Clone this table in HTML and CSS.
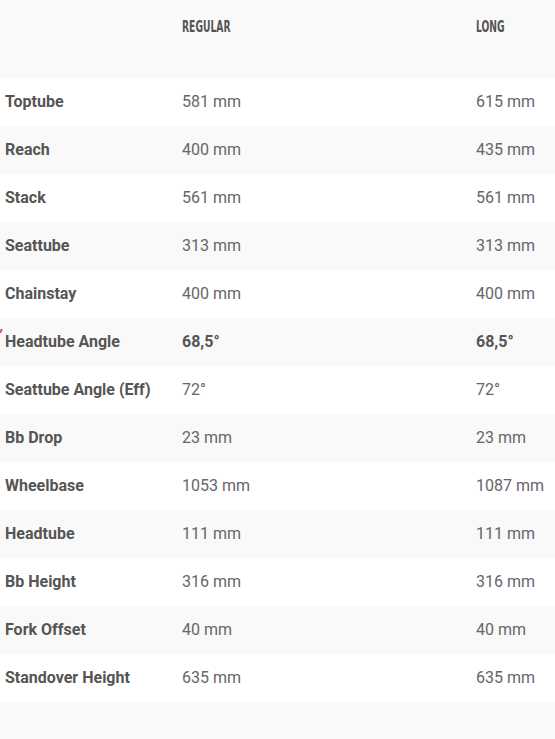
FILE: index.html
```html
<!DOCTYPE html>
<html lang="en">
<head>
<meta charset="utf-8">
<title>Geometry</title>
<link rel="stylesheet" href="styles.css">
</head>
<body>
<div class="geo">
  <div class="row head">
    <div class="cell label"></div>
    <div class="cell"><span class="hd">Regular</span></div>
    <div class="cell"><span class="hd">Long</span></div>
  </div>
  <div class="row"><div class="cell label">Toptube</div><div class="cell">581 mm</div><div class="cell">615 mm</div></div>
  <div class="row alt"><div class="cell label">Reach</div><div class="cell">400 mm</div><div class="cell">435 mm</div></div>
  <div class="row"><div class="cell label">Stack</div><div class="cell">561 mm</div><div class="cell">561 mm</div></div>
  <div class="row alt"><div class="cell label">Seattube</div><div class="cell">313 mm</div><div class="cell">313 mm</div></div>
  <div class="row"><div class="cell label">Chainstay</div><div class="cell">400 mm</div><div class="cell">400 mm</div></div>
  <div class="row alt marked"><div class="cell label">Headtube Angle</div><div class="cell strong">68,5°</div><div class="cell strong">68,5°</div></div>
  <div class="row"><div class="cell label">Seattube Angle (Eff)</div><div class="cell">72°</div><div class="cell">72°</div></div>
  <div class="row alt"><div class="cell label">Bb Drop</div><div class="cell">23 mm</div><div class="cell">23 mm</div></div>
  <div class="row"><div class="cell label">Wheelbase</div><div class="cell">1053 mm</div><div class="cell">1087 mm</div></div>
  <div class="row alt"><div class="cell label">Headtube</div><div class="cell">111 mm</div><div class="cell">111 mm</div></div>
  <div class="row"><div class="cell label">Bb Height</div><div class="cell">316 mm</div><div class="cell">316 mm</div></div>
  <div class="row alt"><div class="cell label">Fork Offset</div><div class="cell">40 mm</div><div class="cell">40 mm</div></div>
  <div class="row"><div class="cell label">Standover Height</div><div class="cell">635 mm</div><div class="cell">635 mm</div></div>
  <div class="row alt foot"></div>
</div>
</body>
</html>
```
FILE: styles.css
```css
html, body {
  margin: 0;
  padding: 0;
  background: #ffffff;
}
body {
  font-family: Roboto, "Liberation Sans", sans-serif;
  font-size: 16px;
  color: #666666;
}
.geo {
  width: 555px;
}
.row {
  display: grid;
  grid-template-columns: 177px 294px 84px;
  height: 48px;
  align-items: center;
  background: #ffffff;
}
.row.alt {
  background: #f9f9f9;
}
.cell {
  padding-left: 5px;
  white-space: nowrap;
  line-height: 18px;
}
.label {
  font-weight: 700;
  color: #555555;
}
.strong {
  font-weight: 700;
  color: #555555;
}
.head {
  height: 78px;
  align-items: start;
  background: #f9f9f9;
}
.head .cell {
  padding-top: 18px;
}
.hd {
  display: inline-block;
  font-family: "DejaVu Sans Condensed", "DejaVu Sans", sans-serif;
  font-weight: 700;
  font-size: 16px;
  line-height: 16px;
  text-transform: uppercase;
  color: #555555;
  transform: scaleX(0.64);
  transform-origin: left center;
}
.foot {
  height: 37px;
}
.marked {
  position: relative;
}
.marked::before {
  content: "";
  position: absolute;
  left: 0;
  top: 11px;
  width: 2px;
  height: 4px;
  background: #e0474c;
  transform: skewX(-25deg);
}
```
